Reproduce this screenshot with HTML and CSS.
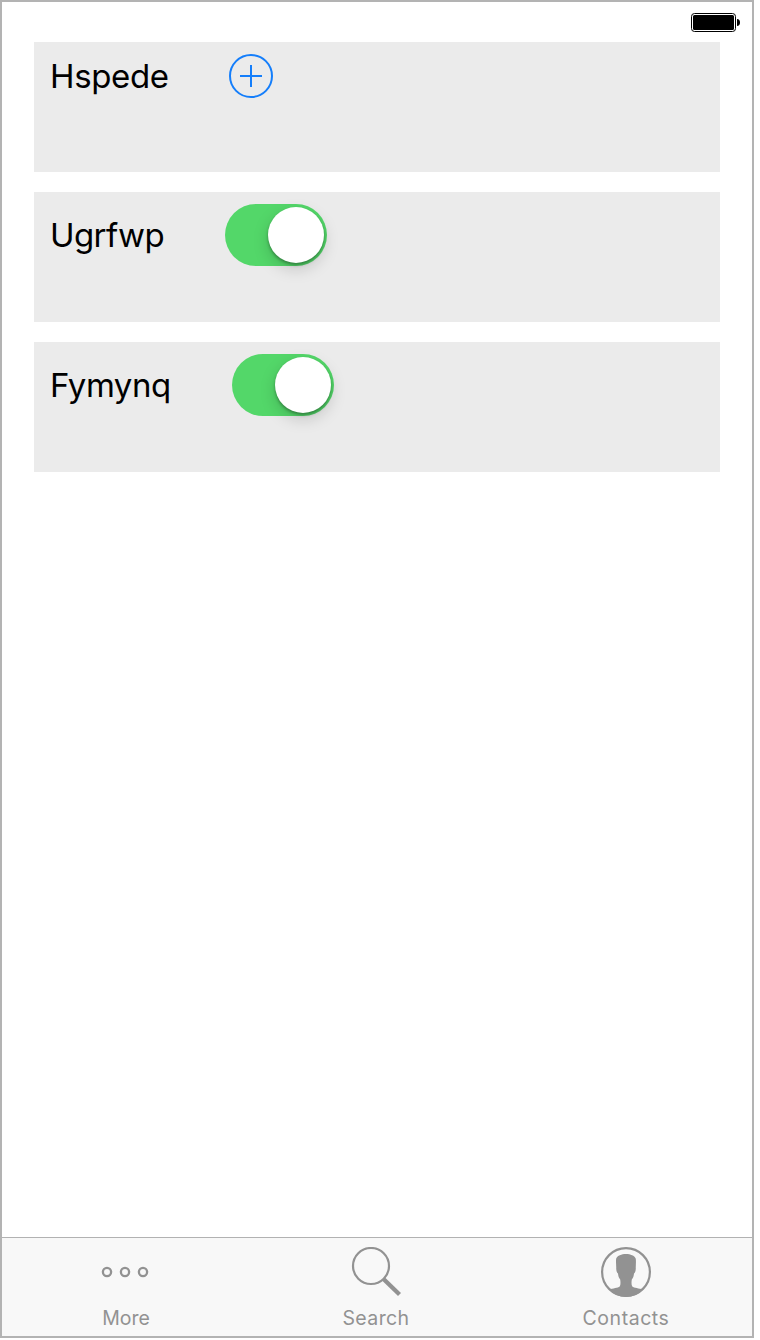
FILE: index.html
```html
<!DOCTYPE html>
<html lang="en">
<head>
<meta charset="utf-8">
<title>Settings</title>
<link rel="stylesheet" href="styles.css">
</head>
<body>
<div class="phone">
  <header class="status">
    <svg class="battery" width="50" height="20" viewBox="0 0 50 20">
      <rect x=".5" y=".5" width="44" height="18" rx="3" fill="#fff" stroke="#000"/>
      <rect x="2" y="2" width="41" height="15" rx="1.5"/>
      <path d="M46 6c2 0 3 1.500 3 3.500s-1 3.500-3 3.500z"/>
    </svg>
  </header>
  <main class="list">
    <section class="card">
      <span class="label label-add">Hspede</span>
      <svg class="add" width="44" height="44" viewBox="0 0 44 44" fill="none" stroke="#147efb" stroke-width="2">
        <circle cx="22" cy="22" r="21"/>
        <path d="M22 11v22M11 22h22"/>
      </svg>
    </section>
    <section class="card">
      <span class="label label-first">Ugrfwp</span>
      <span class="toggle"><span class="knob"></span></span>
    </section>
    <section class="card">
      <span class="label label-second">Fymynq</span>
      <span class="toggle"><span class="knob"></span></span>
    </section>
  </main>
  <nav class="tabs">
    <a class="tab">
      <svg width="50" height="50" viewBox="0 0 50 50" fill="none" stroke="#929292" stroke-width="2.300">
        <circle cx="6" cy="25" r="4.100"/><circle cx="24" cy="25" r="4.100"/><circle cx="42" cy="25" r="4.100"/>
      </svg>
      <span class="more">More</span>
    </a>
    <a class="tab">
      <svg width="50" height="50" viewBox="0 0 50 50" fill="none" stroke="#929292">
        <circle cx="20" cy="19" r="18" stroke-width="2.200"/>
        <path d="M32.500 32L48.500 47.500" stroke-width="4.300"/>
      </svg>
      <span class="search">Search</span>
    </a>
    <a class="tab">
      <svg width="50" height="50" viewBox="0 0 50 50">
        <circle cx="25" cy="25" r="23.900" fill="none" stroke="#929292" stroke-width="2.200"/>
        <path fill="#929292" d="M8 42.500C12 41.300 17 41 18.700 39.500C19.700 38 19.600 35.500 19.200 32.500C17.900 31 17.200 29 17 26.500C16 26 15.300 24 15.200 21.500C15.400 18 14.600 15 15.200 11.500C16.500 8.500 20.500 7 25 7S33.500 8.500 34.700 11.500C35.300 15 34.600 18 34.800 21.500C34.700 24 34 26 33 26.500C32.800 29 32.100 31 30.800 32.500C30.400 35.500 30.300 38 31.300 39.500C33 41 38 41.300 42 42.500Q35 50 25 50T8 42.500Z"/>
      </svg>
      <span class="contacts">Contacts</span>
    </a>
  </nav>
</div>
</body>
</html>
```
FILE: styles.css
```css
* { box-sizing: border-box; }
body { margin: 0; background: #fff; font-family: Inter, "Liberation Sans", sans-serif; }
.phone {
  width: 754px;
  height: 1338px;
  border: 2px solid #b3b3b3;
  display: flex;
  flex-direction: column;
}
svg { display: block; flex: none; }
.status { height: 40px; padding: 11px 11px 0 0; display: flex; justify-content: flex-end; }
.list { flex: 1; padding: 0 32px; display: flex; flex-direction: column; gap: 20px; }
.card {
  height: 130px;
  padding: 12px 16px;
  background: #ebebeb;
  display: flex;
  align-items: flex-start;
}
.label { font-size: 33px; line-height: 40px; color: #000; white-space: nowrap; }
.label-add { width: 179px; margin-top: 2px; letter-spacing: -.35px; }
.label-first { width: 175px; margin-top: 11px; letter-spacing: -.6px; }
.label-second { width: 182px; margin-top: 11px; letter-spacing: -.5px; }
.toggle {
  width: 102px;
  height: 62px;
  padding: 3px;
  border-radius: 31px;
  background: #53d769;
  display: flex;
  justify-content: flex-end;
}
.knob {
  width: 56px;
  height: 56px;
  border-radius: 50%;
  background: #fff;
  box-shadow: 0 2px 3px rgba(0, 0, 0, .3), 0 6px 16px rgba(0, 0, 0, .17);
}
.tabs {
  height: 99px;
  padding-right: 2px;
  border-top: 1px solid #b2b2b2;
  background: #f8f8f8;
  display: grid;
  grid-template-columns: repeat(3, 250px);
}
.tab {
  display: flex;
  flex-direction: column;
  align-items: center;
  padding: 9px 2px 0 0;
  gap: 9px;
  color: #929292;
  font-size: 19.500px;
  line-height: 24px;
}
.search { letter-spacing: .4px; }
.contacts { letter-spacing: .55px; }
```
